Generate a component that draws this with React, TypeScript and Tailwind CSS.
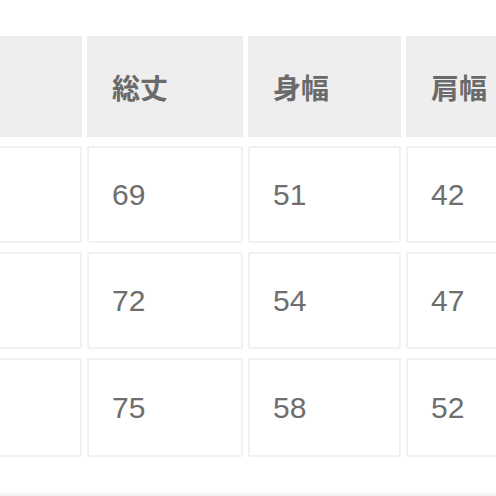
import React from "react";

const font = { fontFamily: '"Liberation Sans", "Noto Sans CJK JP", sans-serif' };

const headers = ["", "総丈", "身幅", "肩幅"];
const rows = [
  ["", "69", "51", "42"],
  ["", "72", "54", "47"],
  ["", "75", "58", "52"],
];

export default function App() {
  return (
    <div className="relative w-[496px] h-[496px] overflow-hidden bg-white" style={font}>
      <div className="ml-[-20px] pt-[36px] grid grid-cols-[102px_156px_153px_160px] grid-rows-[101px_97px_97px_99px] gap-x-[5px] gap-y-[9px]">
        {headers.map((h, i) => (
          <div
            key={"h" + i}
            className="flex items-center pl-[25px] bg-[#eeeeee] text-[#6a6a6a] text-[28px] font-bold"
            style={{ fontFamily: '"Noto Sans CJK JP", sans-serif' }}
          >
            {h}
          </div>
        ))}
        {rows.map((r, ri) =>
          r.map((c, ci) => (
            <div
              key={ri + "-" + ci}
              className="flex items-center pl-[23px] bg-white border-2 border-[#f1f1f1] rounded-[2px] text-[#6e6e6e] text-[30px]"
            >
              {c}
            </div>
          ))
        )}
      </div>
      <div className="absolute left-0 right-0 bottom-0 h-[5px] bg-gradient-to-b from-white to-[#f2f2f2]" />
    </div>
  );
}
